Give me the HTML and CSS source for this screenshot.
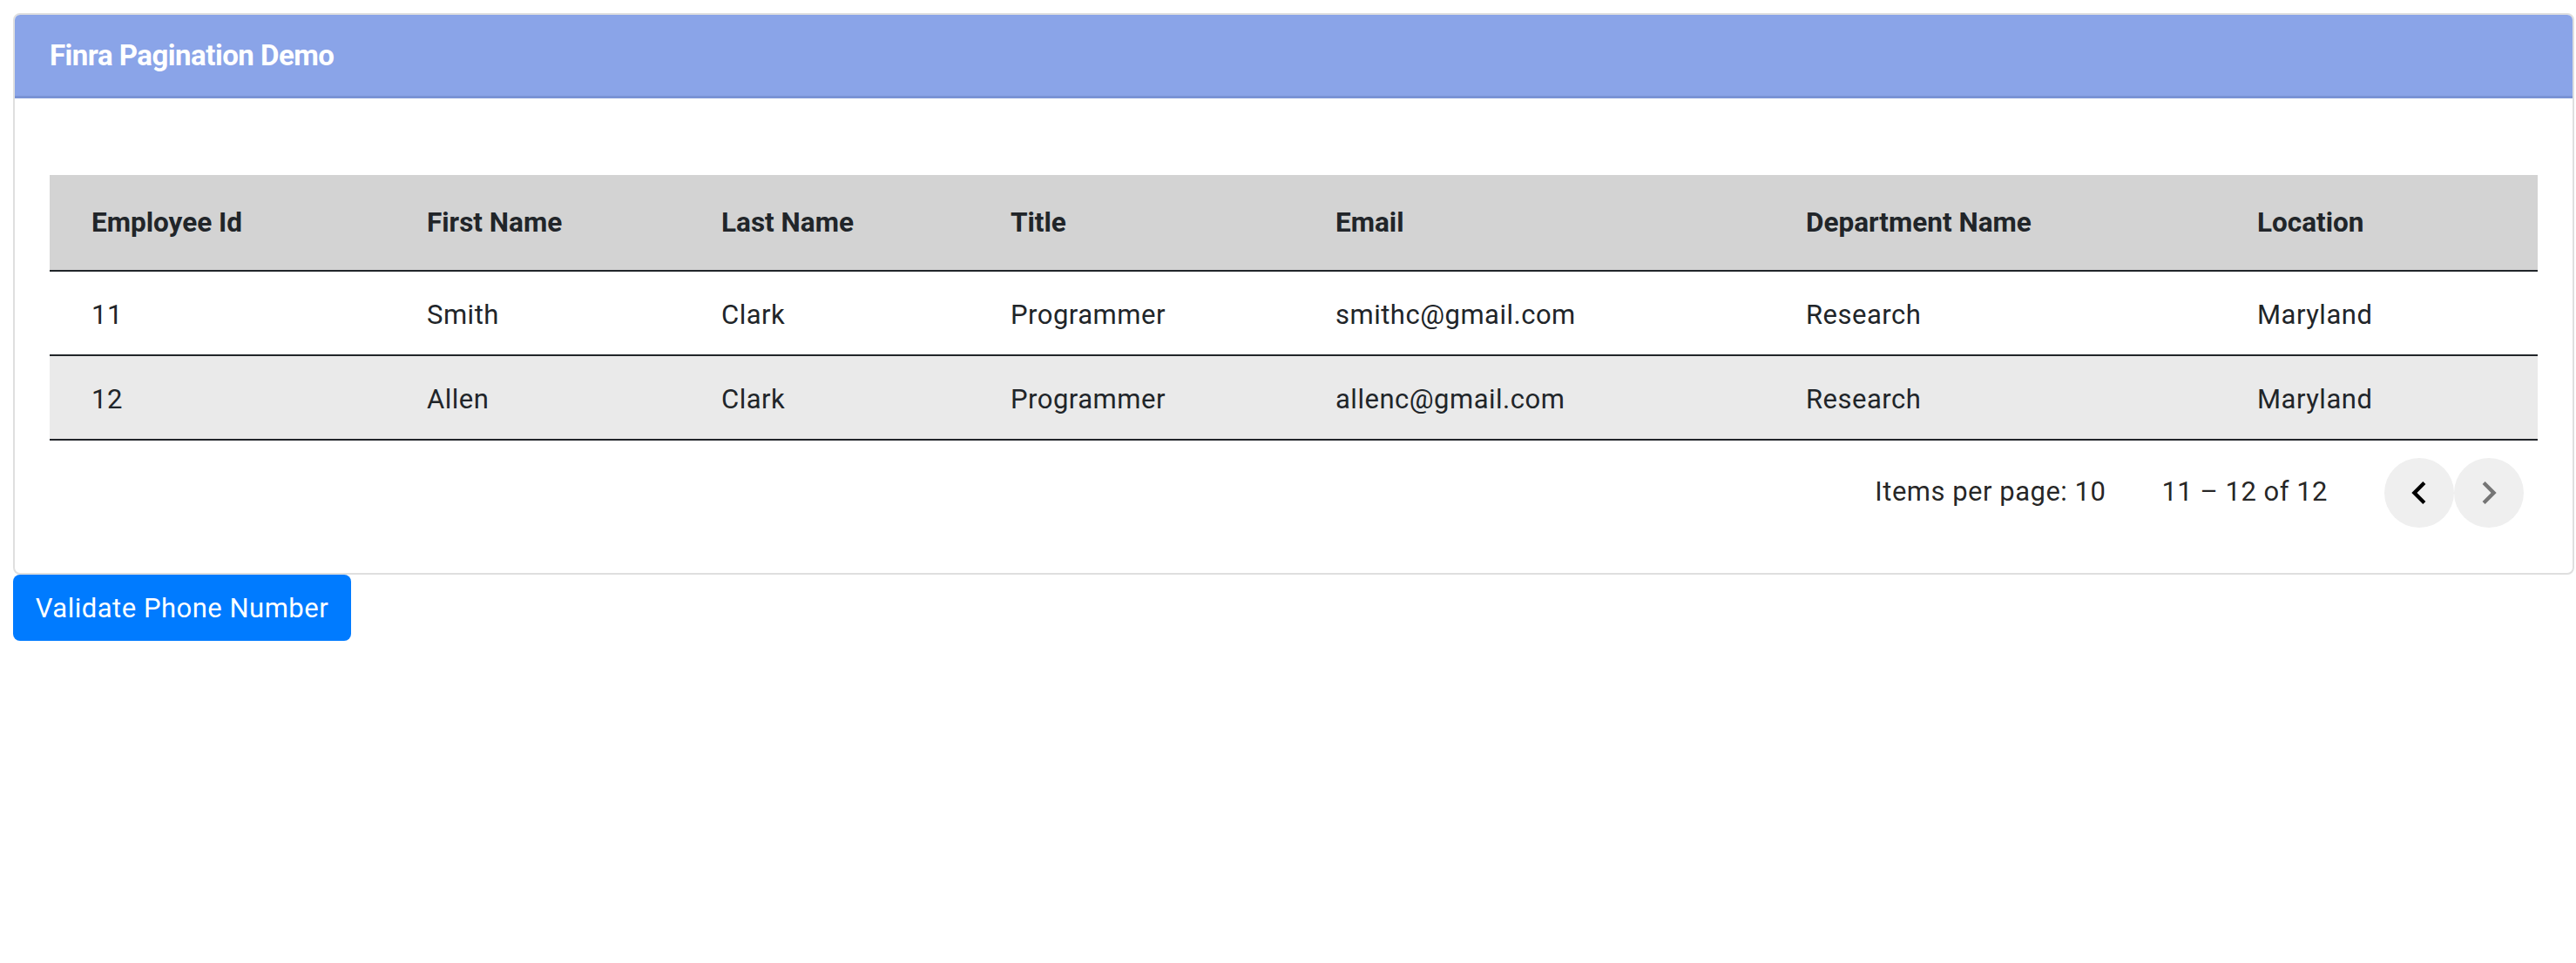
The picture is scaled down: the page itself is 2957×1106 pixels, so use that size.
FILE: index.html
```html
<!DOCTYPE html>
<html lang="en">
<head>
<meta charset="utf-8">
<title>Finra Pagination Demo</title>
<link rel="stylesheet" href="styles.css">
</head>
<body>
<div class="card">
  <div class="card-header">Finra Pagination Demo</div>
  <div class="card-body">
    <table class="grid">
      <colgroup>
        <col class="c-id"><col class="c-first"><col class="c-last"><col class="c-title"><col class="c-email"><col class="c-dept"><col class="c-loc">
      </colgroup>
      <thead>
        <tr>
          <th>Employee Id</th><th>First Name</th><th>Last Name</th><th>Title</th><th>Email</th><th>Department Name</th><th>Location</th>
        </tr>
      </thead>
      <tbody>
        <tr>
          <td>11</td><td>Smith</td><td>Clark</td><td>Programmer</td><td>smithc@gmail.com</td><td>Research</td><td>Maryland</td>
        </tr>
        <tr class="alt">
          <td>12</td><td>Allen</td><td>Clark</td><td>Programmer</td><td>allenc@gmail.com</td><td>Research</td><td>Maryland</td>
        </tr>
      </tbody>
    </table>
    <div class="paginator">
      <span class="per-page">Items per page: 10</span>
      <span class="range">11 – 12 of 12</span>
      <div class="nav">
        <button class="nav-btn prev" aria-label="Previous page">
          <svg viewBox="0 0 24 24" width="52" height="52"><path d="M15.41 7.41L14 6l-6 6 6 6 1.41-1.41L10.83 12z"/></svg>
        </button>
        <button class="nav-btn next" aria-label="Next page">
          <svg viewBox="0 0 24 24" width="52" height="52"><path d="M8.59 16.59L10 18l6-6-6-6-1.41 1.41L13.17 12z"/></svg>
        </button>
      </div>
    </div>
  </div>
</div>
<button class="btn-primary">Validate Phone Number</button>
</body>
</html>
```
FILE: styles.css
```css
html, body {
  margin: 0;
  padding: 0;
  background: #ffffff;
}
body {
  padding: 15px 2px 0 15px;
  font-family: Roboto, "Liberation Sans", Arial, sans-serif;
  color: #212529;
}
.card {
  border: 2px solid #dfdfdf;
  border-radius: 8px;
  overflow: hidden;
  background: #fff;
}
.card-header {
  background: #8aa4e8;
  border-bottom: 3px solid #7a93d5;
  height: 93px;
  display: flex;
  align-items: center;
  padding-left: 40px;
  color: #ffffff;
  font-weight: 700;
  font-size: 33px;
  letter-spacing: -0.5px;
}
.card-body {
  padding: 88px 40px 36px 40px;
}
.grid {
  width: 100%;
  border-collapse: collapse;
  table-layout: fixed;
}
.c-id { width: 385px; }
.c-first { width: 338px; }
.c-last { width: 332px; }
.c-title { width: 373px; }
.c-email { width: 540px; }
.c-dept { width: 518px; }
.c-loc { width: auto; }
.grid th {
  background: #d3d3d3;
  height: 109px;
  padding: 0 0 0 48px;
  text-align: left;
  font-size: 31.5px;
  font-weight: 700;
  border-bottom: 2px solid #212529;
}
.grid td {
  height: 92px;
  padding: 3px 0 0 48px;
  font-size: 31px;
  letter-spacing: 0.5px;
  font-weight: 400;
  border-bottom: 2px solid #212529;
}
.grid .alt td {
  background: #eaeaea;
}
.paginator {
  height: 116px;
  display: flex;
  align-items: center;
  justify-content: flex-end;
  padding-right: 16px;
  font-size: 31px;
  letter-spacing: 0.5px;
  color: rgba(0, 0, 0, 0.87);
}
.range {
  margin-left: 64px;
}
.nav {
  display: flex;
  margin-left: 65px;
  margin-top: 4px;
}
.nav-btn {
  width: 80px;
  height: 80px;
  border-radius: 50%;
  border: none;
  background: #efefef;
  padding: 0;
  display: flex;
  align-items: center;
  justify-content: center;
}
.prev svg { fill: #000000; }
.next svg { fill: #757575; }
.btn-primary {
  margin-top: 0;
  width: 388px;
  height: 76px;
  border: none;
  border-radius: 8px;
  background: #007bff;
  color: #ffffff;
  font-family: Roboto, "Liberation Sans", Arial, sans-serif;
  font-size: 31px;
  letter-spacing: 0.5px;
  padding: 0;
}
```
